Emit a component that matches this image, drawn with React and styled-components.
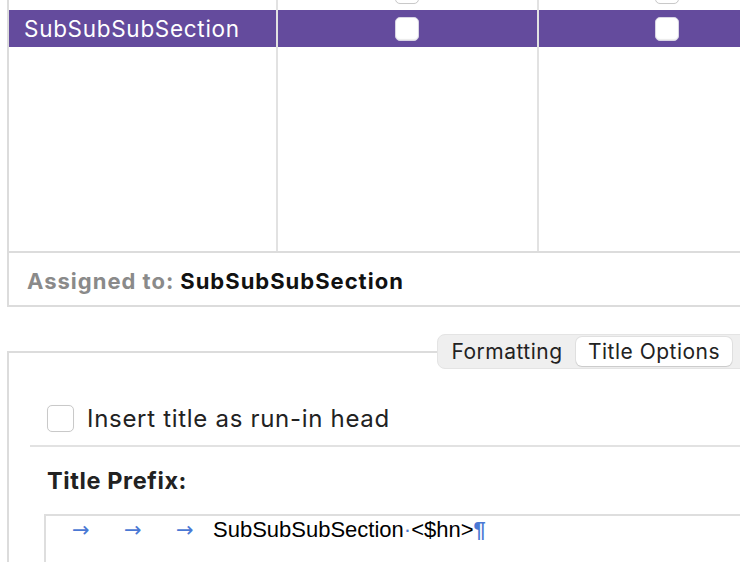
import React from "react";
import styled, { createGlobalStyle } from "styled-components";

const Global = createGlobalStyle`
  html, body { margin: 0; padding: 0; background: #ffffff; overflow: hidden; }
  body { font-family: Inter, "Open Sans", sans-serif; color: #222; }
  #root { width: 740px; height: 562px; overflow: hidden; }
`;

const Page = styled.div`
  display: flex;
  flex-direction: column;
  width: 740px;
`;

const TablePanel = styled.div`
  margin-left: 7px;
  margin-top: -27px;
  width: 760px;
  border-left: 2px solid #dcdcdc;
  border-bottom: 2px solid #dcdcdc;
  display: flex;
  flex-direction: column;
`;

const Row = styled.div`
  display: grid;
  grid-template-columns: 269px 261px 1fr;
  height: ${(p) => p.$h || 37}px;
  background: ${(p) => (p.$selected ? "#644b9d" : "transparent")};
`;

const Cell = styled.div`
  display: flex;
  align-items: center;
  padding-left: ${(p) => p.$pl || 0}px;
  border-right: ${(p) => (p.$last ? "none" : "2px solid #e2e2e2")};
  font-size: 22.5px;
  letter-spacing: 0.7px;
  color: ${(p) => (p.$selected ? "#ffffff" : "#222")};
  white-space: nowrap;
`;

const Check = styled.span`
  display: inline-block;
  box-sizing: border-box;
  width: ${(p) => p.$size || 24}px;
  height: ${(p) => p.$size || 24}px;
  border-radius: 5px;
  background: #ffffff;
  border: 1px solid ${(p) => (p.$onDark ? "#d8d4e4" : "#c9c9c9")};
  box-shadow: ${(p) => (p.$onDark ? "inset 0 -1px 1px rgba(0,0,0,0.08)" : "0 0 1px rgba(0,0,0,0.05)")};
  flex: none;
`;

const Divider = styled.div`
  height: 2px;
  background: #dcdcdc;
`;

const AssignedRow = styled.div`
  height: 52px;
  display: flex;
  align-items: center;
  padding-left: 18px;
  font-size: 22px;
  letter-spacing: 1px;
  font-weight: 700;
  padding-top: 3px;
  box-sizing: border-box;
`;

const Muted = styled.span`
  color: #8a8a8a;
  margin-right: 6px;
`;

const Strong = styled.span`
  color: #111;
`;

const TabPanel = styled.div`
  position: relative;
  margin-left: 7px;
  margin-top: 44px;
  width: 760px;
  height: 230px;
  border-left: 2px solid #dcdcdc;
  border-top: 2px solid #dcdcdc;
  display: flex;
  flex-direction: column;
`;

const Segmented = styled.div`
  position: absolute;
  top: -19px;
  left: 428px;
  height: 35px;
  box-sizing: border-box;
  padding: 2px;
  display: flex;
  align-items: stretch;
  gap: 2px;
  background: #efefef;
  border: 1px solid #e4e4e4;
  border-radius: 8px;
  width: 330px;
`;

const Seg = styled.div`
  display: flex;
  align-items: center;
  justify-content: center;
  width: ${(p) => p.$w}px;
  font-size: 21px;
  letter-spacing: 0.5px;
  color: #222;
  border-radius: 6px;
  background: ${(p) => (p.$active ? "#ffffff" : "transparent")};
  box-shadow: ${(p) => (p.$active ? "0 0 0 1px rgba(0,0,0,0.06), 0 1px 1px rgba(0,0,0,0.1)" : "none")};
`;

const Content = styled.div`
  display: flex;
  flex-direction: column;
  padding-top: 51px;
`;

const CheckRow = styled.label`
  display: flex;
  align-items: center;
  gap: 13px;
  padding-left: 38px;
  font-size: 24px;
  letter-spacing: 0.7px;
  color: #222;
  height: 28px;
`;

const Separator = styled.div`
  margin: 13px 0 0 21px;
  height: 2px;
  background: #e2e2e2;
`;

const SectionLabel = styled.div`
  padding: 19px 0 0 38px;
  font-size: 23.5px;
  letter-spacing: 0.6px;
  font-weight: 700;
  color: #222;
`;

const TextBox = styled.div`
  margin: 19px 0 0 35px;
  border-left: 2px solid #dedede;
  border-top: 2px solid #dedede;
  height: 80px;
  padding: 1px 0 0 26px;
  display: flex;
  align-items: baseline;
  font-family: "Liberation Sans", Arial, sans-serif;
  font-size: 22px;
  color: #000;
`;

const TabMark = styled.span`
  display: inline-block;
  width: ${(p) => p.$w}px;
  color: #4a78d4;
  font-family: "DejaVu Sans", sans-serif;
  font-size: 21px;
`;

const Invisible = styled.span`
  color: #4a78d4;
  font-size: ${(p) => p.$size || 22}px;
  font-weight: ${(p) => (p.$bold ? 700 : 400)};
`;

export default function App() {
  const rows = [
    { label: "SubSubSection", selected: false },
    { label: "SubSubSubSection", selected: true },
  ];
  return (
    <Page>
      <Global />
      <TablePanel>
        {rows.map((r) => (
          <Row key={r.label} $selected={r.selected}>
            <Cell $pl={15} $selected={r.selected}>{r.label}</Cell>
            <Cell $pl={117}>
              <Check $onDark={r.selected} />
            </Cell>
            <Cell $pl={116} $last>
              <Check $onDark={r.selected} />
            </Cell>
          </Row>
        ))}
        <Row $h={204}>
          <Cell />
          <Cell />
          <Cell $last />
        </Row>
        <Divider />
        <AssignedRow>
          <Muted>Assigned to:</Muted>
          <Strong>SubSubSubSection</Strong>
        </AssignedRow>
      </TablePanel>
      <TabPanel>
        <Segmented>
          <Seg $w={134}>Formatting</Seg>
          <Seg $w={156} $active>Title Options</Seg>
        </Segmented>
        <Content>
          <CheckRow>
            <Check $size={27} />
            Insert title as run-in head
          </CheckRow>
          <Separator />
          <SectionLabel>Title Prefix:</SectionLabel>
          <TextBox>
            <TabMark $w={52}>→</TabMark>
            <TabMark $w={52}>→</TabMark>
            <TabMark $w={37}>→</TabMark>
            <span>SubSubSubSection</span>
            <Invisible>·</Invisible>
            <span>&lt;$hn&gt;</span>
            <Invisible $bold>¶</Invisible>
          </TextBox>
        </Content>
      </TabPanel>
    </Page>
  );
}
